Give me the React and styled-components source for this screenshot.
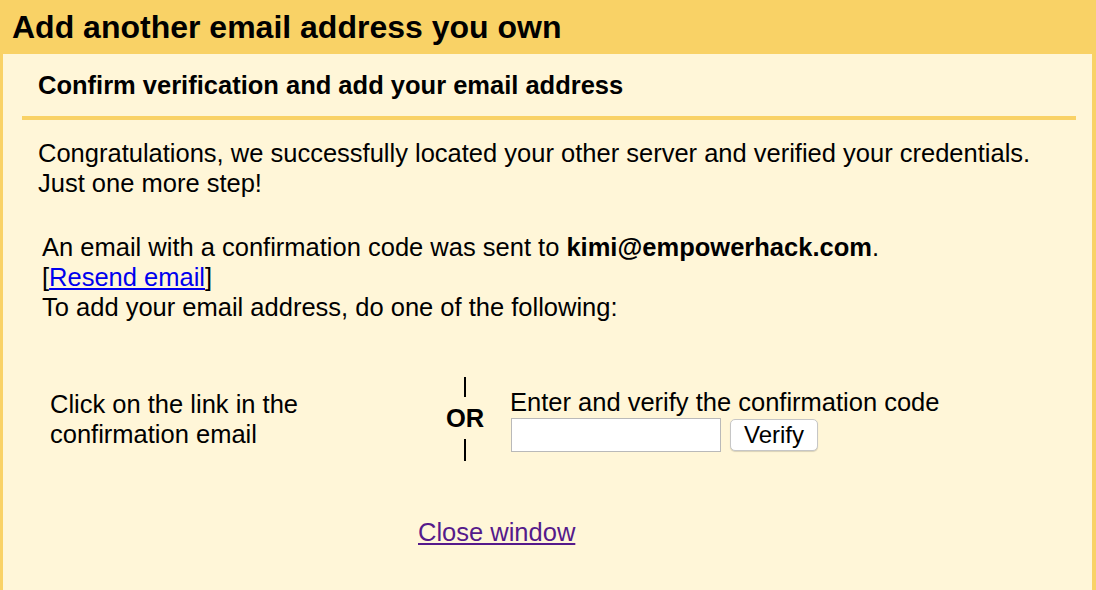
import React from "react";
import styled, { createGlobalStyle } from "styled-components";

const GlobalStyle = createGlobalStyle`
  html, body {
    margin: 0;
    padding: 0;
    background: #fff6d8;
  }
  body {
    font-family: "Liberation Sans", Arial, sans-serif;
    color: #000;
  }
`;

const Frame = styled.div`
  width: 1096px;
  height: 590px;
  box-sizing: border-box;
  background: #f9d266;
  padding: 0 4px 0 3px;
  display: flex;
  flex-direction: column;
  overflow: hidden;
`;

const Header = styled.h1`
  margin: 0;
  height: 54px;
  box-sizing: border-box;
  padding: 8px 0 0 9px;
  font-size: 32px;
  font-weight: bold;
  line-height: 38px;
  white-space: nowrap;
`;

const Panel = styled.div`
  flex: 1;
  background: #fff6d8;
  padding: 0 16px 0 19px;
`;

const SectionTitle = styled.div`
  padding: 16px 16px;
  font-size: 25.5px;
  font-weight: bold;
  line-height: 30px;
  border-bottom: 4px solid #f9d266;
  white-space: nowrap;
`;

const Body = styled.div`
  padding: 18px 0 0 16px;
  font-size: 25.5px;
  line-height: 30px;
`;

const Para = styled.p`
  margin: 0 0 34px;
  padding-left: ${({ $indent }) => $indent || 0}px;
  white-space: nowrap;
`;

const Link = styled.a`
  color: ${({ $visited }) => ($visited ? "#551a8b" : "#0000ee")};
  text-decoration: underline;
  cursor: pointer;
`;

const Choices = styled.div`
  display: grid;
  grid-template-columns: 390px 50px 1fr;
  align-items: center;
  margin-top: 55px;
  padding-left: 12px;
`;

const ChoiceText = styled.div`
  line-height: 30px;
`;

const OrColumn = styled.div`
  display: flex;
  flex-direction: column;
  align-items: center;
  font-weight: bold;
  line-height: 42px;
`;

const Bar = styled.div`
  width: 2px;
  height: ${({ $h }) => $h}px;
  background: #000;
`;

const CodeBox = styled.div`
  padding-left: 20px;
  white-space: nowrap;
`;

const CodeRow = styled.div`
  display: flex;
  align-items: center;
  gap: 9px;
  margin-top: 1px;
`;

const Input = styled.input`
  width: 210px;
  height: 34px;
  box-sizing: border-box;
  border: 1px solid #b9b9b9;
  background: #fff;
  margin: 0 0 0 1px;
`;

const VerifyButton = styled.button`
  height: 32px;
  padding: 0 13px;
  font-family: "Liberation Sans", Arial, sans-serif;
  font-size: 24px;
  line-height: 30px;
  background: #fff;
  border: 1px solid #c6c6c6;
  border-radius: 5px;
  box-shadow: 0 1px 1px rgba(0, 0, 0, 0.15);
`;

const Footer = styled.div`
  margin-top: 56px;
  padding-left: 380px;
`;

export default function App() {
  return (
    <>
      <GlobalStyle />
      <Frame>
        <Header>Add another email address you own</Header>
        <Panel>
          <SectionTitle>Confirm verification and add your email address</SectionTitle>
          <Body>
            <Para>
              Congratulations, we successfully located your other server and verified your credentials.
              <br />
              Just one more step!
            </Para>
            <Para $indent={4}>
              An email with a confirmation code was sent to <b>kimi@empowerhack.com</b>.
              <br />
              [<Link>Resend email</Link>]
              <br />
              To add your email address, do one of the following:
            </Para>
            <Choices>
              <ChoiceText>
                Click on the link in the
                <br />
                confirmation email
              </ChoiceText>
              <OrColumn>
                <Bar $h={20} />
                OR
                <Bar $h={22} />
              </OrColumn>
              <CodeBox>
                Enter and verify the confirmation code
                <CodeRow>
                  <Input type="text" />
                  <VerifyButton>Verify</VerifyButton>
                </CodeRow>
              </CodeBox>
            </Choices>
            <Footer>
              <Link $visited>Close window</Link>
            </Footer>
          </Body>
        </Panel>
      </Frame>
    </>
  );
}
